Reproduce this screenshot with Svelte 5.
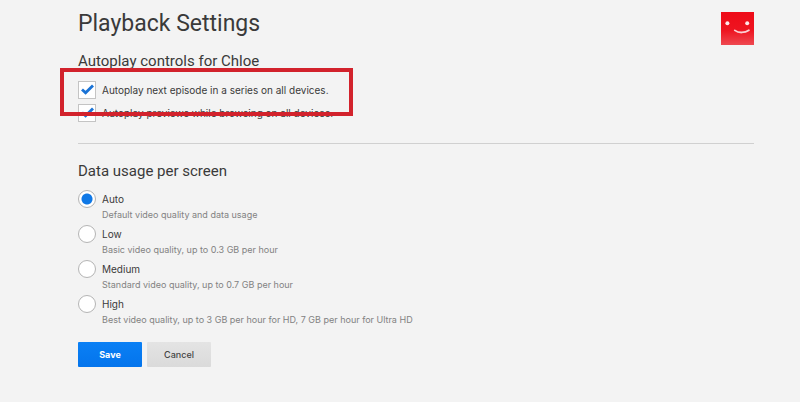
<script lang="ts">
	const previews = [
		{ id: 'next-episode', label: 'Autoplay next episode in a series on all devices.' },
		{ id: 'previews', label: 'Autoplay previews while browsing on all devices.' }
	];

	const qualities = [
		{ id: 'auto', label: 'Auto', hint: 'Default video quality and data usage' },
		{ id: 'low', label: 'Low', hint: 'Basic video quality, up to 0.3 GB per hour' },
		{ id: 'medium', label: 'Medium', hint: 'Standard video quality, up to 0.7 GB per hour' },
		{
			id: 'high',
			label: 'High',
			hint: 'Best video quality, up to 3 GB per hour for HD, 7 GB per hour for Ultra HD'
		}
	];

	let enabled = $state(['next-episode', 'previews']);
	let quality = $state('auto');
</script>

<main class="page">
	<header class="header">
		<h1>Playback Settings</h1>
		<svg class="avatar" viewBox="0 0 33 33" role="img" aria-label="Profile">
			<defs>
				<linearGradient id="avatar-red" x1="0" y1="0" x2="0" y2="1">
					<stop offset="0" stop-color="#ee0b18" />
					<stop offset="0.55" stop-color="#ee1420" />
					<stop offset="1" stop-color="#ee4850" />
				</linearGradient>
			</defs>
			<rect width="33" height="33" fill="url(#avatar-red)" />
			<circle cx="6.4" cy="11.2" r="2" fill="#fde8e9" />
			<circle cx="26.2" cy="11.2" r="2" fill="#fde8e9" />
			<path
				d="M13.8 18.4c3.8 2.8 10 2.8 14.1-.2"
				fill="none"
				stroke="#fbd0d3"
				stroke-width="1.8"
				stroke-linecap="round"
			/>
		</svg>
	</header>

	<form>
		<section class="autoplay">
			<h2>Autoplay controls for Chloe</h2>
			<div class="checks">
				{#each previews as item (item.id)}
					<label class="check">
						<input type="checkbox" value={item.id} bind:group={enabled} />
						<svg class="tick" viewBox="0 0 18 18" aria-hidden="true">
							<path d="M4 8.4l3.6 3.4L15 4.4" fill="none" stroke="#1a73d6" stroke-width="2.8" />
						</svg>
						<span class="name">{item.label}</span>
					</label>
				{/each}
				<div class="callout" aria-hidden="true"></div>
			</div>
		</section>

		<section class="usage">
			<h2>Data usage per screen</h2>
			<div class="radios">
				{#each qualities as item (item.id)}
					<label class="radio">
						<input type="radio" name="quality" value={item.id} bind:group={quality} />
						<span class="name">{item.label}</span>
						<span class="hint">{item.hint}</span>
					</label>
				{/each}
			</div>
		</section>

		<div class="actions">
			<button type="button" class="save">Save</button>
			<button type="button" class="cancel">Cancel</button>
		</div>
	</form>
</main>

<style>
	:global(body) {
		background: #f3f3f3;
	}

	.page {
		padding: 12px 46px 35px 78px;
		font-family: Inter, sans-serif;
		color: #3a3a3a;
	}

	.header {
		display: flex;
		justify-content: space-between;
		align-items: flex-start;
		height: 38px;
	}

	h1,
	h2 {
		margin: 0;
		font-family: Roboto, sans-serif;
		font-weight: 400;
	}

	h1 {
		font-size: 23px;
		line-height: 24px;
	}

	h2 {
		font-size: 15px;
		line-height: 22px;
	}

	.avatar {
		width: 33px;
		height: 33px;
	}

	.autoplay {
		padding-bottom: 21px;
		border-bottom: 1px solid #d0d0d0;
	}

	.checks {
		position: relative;
		display: flex;
		flex-direction: column;
		gap: 5px;
		margin-top: 9px;
	}

	.check {
		display: grid;
		grid-template-columns: 18px 1fr;
		column-gap: 6px;
		align-items: center;
	}

	.check input,
	.tick {
		grid-area: 1 / 1;
		width: 18px;
		height: 18px;
	}

	.check input {
		appearance: none;
		box-sizing: border-box;
		margin: 0;
		border: 1px solid #c4c4c4;
		background: #fff;
	}

	.tick {
		visibility: hidden;
		pointer-events: none;
	}

	input:checked + .tick {
		visibility: visible;
	}

	/* Red marker drawn over the first option */
	.callout {
		position: absolute;
		top: -13px;
		left: -18px;
		box-sizing: border-box;
		width: 293px;
		height: 48px;
		border: 4px solid #d2222c;
		pointer-events: none;
	}

	.usage {
		padding-top: 16px;
	}

	.radios {
		display: flex;
		flex-direction: column;
		gap: 3px;
		margin-top: 8px;
	}

	.radio {
		display: grid;
		grid-template-columns: 18px 1fr;
		grid-template-rows: 18px 14px;
		column-gap: 6px;
		align-items: center;
	}

	.radio input {
		appearance: none;
		box-sizing: border-box;
		width: 18px;
		height: 18px;
		margin: 0;
		border: 1px solid #b4b4b4;
		border-radius: 50%;
		background: #fff;
	}

	.radio input:checked {
		background: radial-gradient(circle, #0f78e6 5px, #fff 6px);
	}

	.name {
		font-size: 10px;
		line-height: 18px;
	}

	.hint {
		grid-column: 2;
		font-size: 9px;
		line-height: 14px;
		color: #828282;
	}

	.actions {
		display: flex;
		gap: 5px;
		margin-top: 15px;
	}

	button {
		width: 64px;
		height: 25px;
		padding: 0;
		border: 0;
		border-radius: 1px;
		font-family: inherit;
		font-size: 9px;
		font-weight: 500;
	}

	.save {
		background: linear-gradient(#0a80f5, #0474ec);
		color: #fff;
		font-weight: 700;
	}

	.cancel {
		background: linear-gradient(#e4e4e4, #dadada);
		color: #444;
	}
</style>
